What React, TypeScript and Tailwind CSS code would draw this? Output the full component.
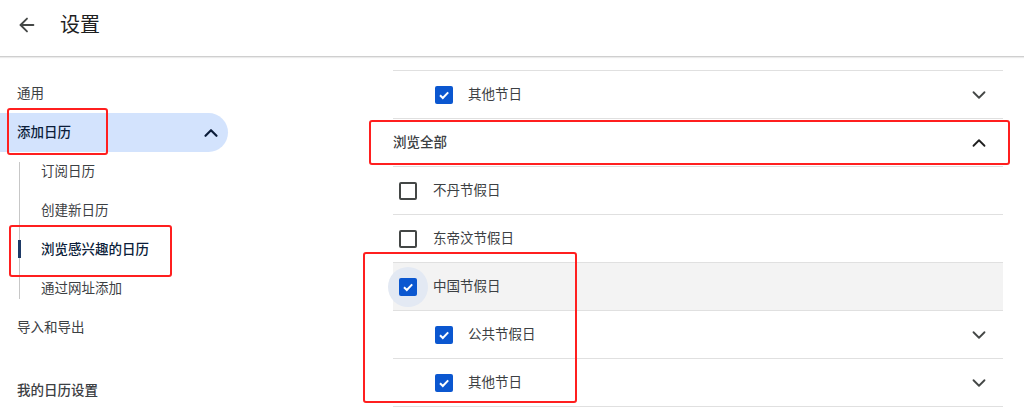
import React from "react";
import clsx from "clsx";
import { ArrowLeft, ChevronDown, ChevronUp } from "lucide-react";

const Checkbox = ({ checked, halo }: { checked?: boolean; halo?: boolean }) => (
  <div
    className={clsx(
      "w-[40px] h-[40px] rounded-full flex items-center justify-center shrink-0",
      halo && "bg-[#e3e9f3]"
    )}
  >
    {checked ? (
      <span className="w-[18px] h-[18px] rounded-[2px] bg-[#0b57d0] flex items-center justify-center">
        <svg width="12" height="12" viewBox="0 0 12 12">
          <path d="M2 6.3 L4.8 9 L10.2 3.4" stroke="white" strokeWidth="2" fill="none" />
        </svg>
      </span>
    ) : (
      <span className="w-[18px] h-[18px] rounded-[2px] border-2 border-[#444746]" />
    )}
  </div>
);

interface RowProps {
  label: string;
  checked?: boolean;
  indent?: boolean;
  chevron?: "up" | "down";
  halo?: boolean;
  header?: boolean;
  className?: string;
}

const Row = ({ label, checked, indent, chevron, halo, header, className }: RowProps) => (
  <div className={clsx("h-[48px] border-b border-[#e0e0e0] flex items-center", className)}>
    {header ? (
      <span className="font-medium text-[#3c4043]">{label}</span>
    ) : (
      <>
        <div className={indent ? "ml-[31px]" : "ml-[-5px]"}>
          <Checkbox checked={checked} halo={halo} />
        </div>
        <span className={clsx("text-[#3c4043]", indent ? "ml-[4px]" : "ml-[5px]")}>{label}</span>
      </>
    )}
    {chevron === "down" && (
      <ChevronDown size={22} strokeWidth={2} className="ml-auto mr-[13px] text-[#444746]" />
    )}
    {chevron === "up" && (
      <ChevronUp size={22} strokeWidth={2} className="ml-auto mr-[13px] text-[#1f1f1f]" />
    )}
  </div>
);

const SideItem = ({ label, className }: { label: string; className?: string }) => (
  <div className={clsx("h-[39px] flex items-center pl-[17px] text-[#3c4043]", className)}>{label}</div>
);

export default function App() {
  return (
    <div
      className="relative w-[1024px] h-[414px] overflow-hidden bg-white text-[13.5px]"
      style={{ fontFamily: '"Noto Sans", "Noto Sans CJK SC", sans-serif' }}
    >
      <header className="h-[57px] pb-[6px] flex items-center border-b border-[#cfcfcf] shadow-[0_1px_1px_rgba(0,0,0,0.08)]">
        <ArrowLeft size={22} strokeWidth={2} className="ml-[16px] text-[#444746]" />
        <span className="ml-[22px] text-[20px] text-[#1f1f1f]">设置</span>
      </header>

      <div className="flex">
        <nav className="w-[228px] shrink-0 pt-[17px]">
          <SideItem label="通用" />
          <div className="h-[39px] flex items-center pl-[17px] pr-[6px] bg-[#d3e3fd] rounded-r-full">
            <span className="font-medium text-[#0b1d3a]">添加日历</span>
            <ChevronUp size={22} strokeWidth={2.4} className="ml-auto text-[#0b1d3a]" />
          </div>
          <div className="relative">
            <div className="absolute left-[19px] top-[10px] bottom-[9px] w-px bg-[#c7c7c7]" />
            <SideItem label="订阅日历" className="pl-[41px]" />
            <SideItem label="创建新日历" className="pl-[41px]" />
            <div className="relative h-[39px] flex items-center pl-[41px] font-medium text-[#0b1d3a]">
              <div className="absolute left-[18px] top-[10px] h-[18px] w-[3px] bg-[#1e3a66]" />
              浏览感兴趣的日历
            </div>
            <SideItem label="通过网址添加" className="pl-[41px]" />
          </div>
          <SideItem label="导入和导出" />
          <SideItem label="我的日历设置" className="mt-[24px] font-medium text-[#1f1f1f]" />
        </nav>

        <main className="pt-[13px] pl-[165px]">
          <div className="w-[610px] border-t border-[#e0e0e0]">
            <Row label="其他节日" checked indent chevron="down" />
            <Row label="浏览全部" header chevron="up" />
            <Row label="不丹节假日" />
            <Row label="东帝汶节假日" />
            <Row label="中国节假日" checked halo className="bg-[#f3f3f3]" />
            <Row label="公共节假日" checked indent chevron="down" />
            <Row label="其他节日" checked indent chevron="down" />
          </div>
        </main>
      </div>

      {/* annotation boxes */}
      <div className="absolute left-[7px] top-[108px] w-[101px] h-[47px] border-2 border-[#ff1f1f] rounded-[3px]" />
      <div className="absolute left-[9px] top-[225px] w-[163px] h-[52px] border-2 border-[#ff1f1f] rounded-[3px]" />
      <div className="absolute left-[369px] top-[120px] w-[641px] h-[45px] border-2 border-[#ff1f1f] rounded-[3px]" />
      <div className="absolute left-[363px] top-[252px] w-[214px] h-[151px] border-2 border-[#ff1f1f] rounded-[3px]" />
    </div>
  );
}
